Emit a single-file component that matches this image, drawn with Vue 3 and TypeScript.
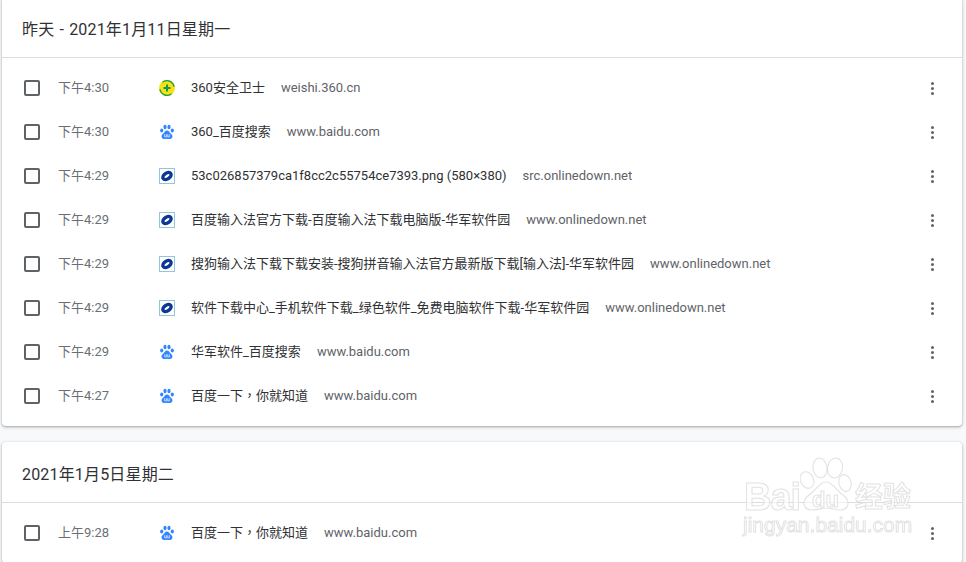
<script setup lang="ts">
interface Row { time: string; icon: 'q' | 'b' | 'o'; title: string; domain: string }
interface Group { date: string; rows: Row[] }
const groups: Group[] = [
  { date: '昨天 - 2021年1月11日星期一', rows: [
    { time: '下午4:30', icon: 'q', title: '360安全卫士', domain: 'weishi.360.cn' },
    { time: '下午4:30', icon: 'b', title: '360_百度搜索', domain: 'www.baidu.com' },
    { time: '下午4:29', icon: 'o', title: '53c026857379ca1f8cc2c55754ce7393.png (580×380)', domain: 'src.onlinedown.net' },
    { time: '下午4:29', icon: 'o', title: '百度输入法官方下载-百度输入法下载电脑版-华军软件园', domain: 'www.onlinedown.net' },
    { time: '下午4:29', icon: 'o', title: '搜狗输入法下载下载安装-搜狗拼音输入法官方最新版下载[输入法]-华军软件园', domain: 'www.onlinedown.net' },
    { time: '下午4:29', icon: 'o', title: '软件下载中心_手机软件下载_绿色软件_免费电脑软件下载-华军软件园', domain: 'www.onlinedown.net' },
    { time: '下午4:29', icon: 'b', title: '华军软件_百度搜索', domain: 'www.baidu.com' },
    { time: '下午4:27', icon: 'b', title: '百度一下，你就知道', domain: 'www.baidu.com' },
  ] },
  { date: '2021年1月5日星期二', rows: [
    { time: '上午9:28', icon: 'b', title: '百度一下，你就知道', domain: 'www.baidu.com' },
  ] },
]
</script>

<template>
  <div class="page">
    <section v-for="g in groups" :key="g.date" class="card">
      <h2 class="date">{{ g.date }}</h2>
      <ul class="rows">
        <li v-for="(r, i) in g.rows" :key="i" class="row">
          <span class="box"></span>
          <span class="time">{{ r.time }}</span>
          <svg v-if="r.icon === 'q'" class="fav" viewBox="0 0 16 16">
            <circle cx="8" cy="8" r="8" fill="#f7e21a" />
            <path d="M3.500 1.400A8 8 0 0 1 15.800 6.400L14.300 6.800A6.500 6.500 0 0 0 3.500 3Z" fill="#1f9e45" />
            <path d="M12.500 14.600A8 8 0 0 1 .2 9.600L1.700 9.200A6.500 6.500 0 0 0 12.500 13Z" fill="#1f9e45" />
            <path d="M7 4.500h2V7h2.500v2H9v2.500H7V9H4.500V7H7z" fill="#129a48" />
          </svg>
          <svg v-else-if="r.icon === 'b'" class="fav" viewBox="0 0 16 16" fill="#3385ff">
            <ellipse cx="2.700" cy="6.500" rx="1.600" ry="2" />
            <ellipse cx="6" cy="3" rx="1.600" ry="2.200" />
            <ellipse cx="10" cy="3" rx="1.600" ry="2.200" />
            <ellipse cx="13.300" cy="6.500" rx="1.600" ry="2" />
            <path d="M8 6.500C6 6.500 5.500 8.500 4 9.800 2.500 11 2.300 12.300 2.800 13.500 3.500 15 5.500 15.300 8 14.800 10.500 15.300 12.500 15 13.200 13.500 13.700 12.300 13.500 11 12 9.800 10.500 8.500 10 6.500 8 6.500Z" />
            <path d="M5.700 10.300v2.600h1.700v-2.600M8.700 10.300v2.600h1.700v-2.600" fill="none" stroke="#cfe2ff" stroke-width=".9" />
          </svg>
          <svg v-else class="fav" viewBox="0 0 16 16">
            <rect x=".5" y=".5" width="15" height="15" fill="#fff" stroke="#93c6d6" />
            <ellipse cx="8" cy="8" rx="4.600" ry="2.900" transform="rotate(-35 8 8)" fill="none" stroke="#0c3797" stroke-width="3.400" />
          </svg>
          <span class="title">
            <template v-for="(part, k) in r.title.split('，')" :key="k"><span v-if="k > 0" class="comma">，</span>{{ part }}</template>
          </span>
          <span class="domain">{{ r.domain }}</span>
          <span class="more"><i></i><i></i><i></i></span>
        </li>
      </ul>
    </section>
    <div class="mark">
      <svg class="paw" viewBox="0 0 52 56" fill="rgba(255,255,255,.6)" stroke="#e2e2e2" stroke-width="1.100">
        <ellipse cx="20" cy="12" rx="7" ry="10" transform="rotate(-8 20 12)" />
        <ellipse cx="35" cy="12" rx="7.500" ry="10" transform="rotate(10 35 12)" />
        <ellipse cx="7" cy="24" rx="6.500" ry="8.500" transform="rotate(-25 7 24)" />
        <ellipse cx="45" cy="27" rx="6" ry="8.500" transform="rotate(-15 45 27)" />
        <path d="M26 26C19 26 17 34 9 39 2 44 2 54 12 54 18 54 22 52 26 52 31 52 35 54 40 54 50 54 50 44 43 39 35 34 33 26 26 26Z" />
      </svg>
      <span class="bai">Bai</span>
      <span class="du">du</span>
      <span class="jy">经验</span>
      <span class="url">jingyan.baidu.com</span>
    </div>
  </div>
</template>

<style scoped>
.page {
  position: relative;
  height: 562px;
  overflow: hidden;
  padding: 0 4px 0 2px;
  box-sizing: border-box;
  font-family: Roboto, "Noto Sans CJK SC", sans-serif;
}
.card {
  background: #fff;
  border-radius: 4px;
  box-shadow: 0 1px 2px rgba(60, 64, 67, .3), 0 1px 3px 1px rgba(60, 64, 67, .15);
  margin-bottom: 16px;
}
.card:first-child { margin-top: -3px; }
.date {
  margin: 0;
  height: 61px;
  box-sizing: border-box;
  padding: 6px 20px 0;
  line-height: 54px;
  font-size: 16px;
  font-weight: 400;
  letter-spacing: .17px;
  word-spacing: 1px;
  color: #303134;
  border-bottom: 1px solid #dadce0;
}
.rows { list-style: none; margin: 0; padding: 8px 0; }
.row {
  display: flex;
  align-items: center;
  height: 44px;
  font-size: 13px;
  line-height: 18px;
  padding-left: 22px;
}
.box {
  width: 12px;
  height: 12px;
  border: 2px solid #5f6368;
  border-radius: 2px;
  flex: none;
}
.time { width: 101px; margin-left: 18px; color: #6b6f74; flex: none; }
.fav { width: 16px; height: 16px; margin-right: 16px; flex: none; }
.title { color: #303134; white-space: nowrap; }
.comma { font-family: "Noto Sans CJK TC", sans-serif; line-height: 1; }
.domain { color: #5f6368; margin-left: 16px; white-space: nowrap; }
.more {
  margin-left: auto;
  margin-right: 28px;
  display: flex;
  flex-direction: column;
  gap: 2px;
}
.more i { width: 3px; height: 3px; border-radius: 50%; background: #5f6368; display: block; }
.mark {
  position: absolute;
  left: 740px;
  top: 456px;
  width: 180px;
  height: 90px;
  pointer-events: none;
  filter: blur(.3px);
}
.paw { position: absolute; left: 60px; top: 0; width: 52px; height: 56px; }
.mark span {
  position: absolute;
  font-family: "Liberation Sans", "Noto Sans CJK SC", sans-serif;
  color: rgba(255, 255, 255, .6);
  -webkit-text-stroke: 1px #e2e2e2;
  white-space: nowrap;
}
.bai { left: 4px; top: 24px; font-size: 38px; font-weight: 700; line-height: 34px; letter-spacing: -1px; }
.du { left: 72px; top: 29px; font-size: 22px; font-weight: 700; line-height: 30px; }
.jy { left: 115px; top: 24px; font-size: 28px; line-height: 36px; font-weight: 700; }
.url { left: 3px; top: 58px; font-size: 21px; line-height: 22px; }
</style>

<style>
html, body { margin: 0; background: #f8f9fa; overflow: hidden; }
</style>
